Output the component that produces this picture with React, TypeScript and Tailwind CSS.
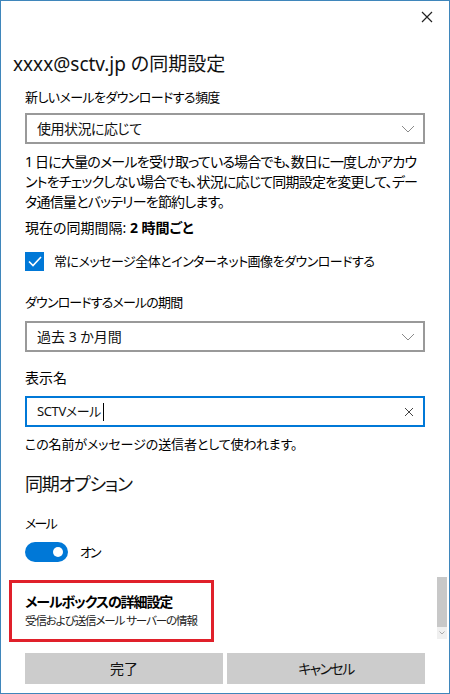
const font = "[font-family:'Noto_Sans','Noto_Sans_CJK_JP',sans-serif] [font-feature-settings:'palt']";

function Chevron() {
  return (
    <svg width="14" height="8" viewBox="0 0 14 8" className="shrink-0">
      <path d="M1 1 L7 7 L13 1" fill="none" stroke="#8a8a8a" strokeWidth="1" />
    </svg>
  );
}

function Select({ value, track }: { value: string; track: string }) {
  return (
    <div className="flex h-[31px] items-center justify-between border-2 border-[#999999] bg-white pl-[10px] pr-[8px]">
      <span className={`text-[14px] text-[#111] ${track}`}>{value}</span>
      <Chevron />
    </div>
  );
}

export default function App() {
  return (
    <div className={`relative h-[694px] w-[450px] overflow-hidden border border-[#3f86bb] bg-white text-black ${font}`}>
      {/* close */}
      <div className="flex h-[32px] justify-end pr-[16px] pt-[10px]">
        <svg width="12" height="12" viewBox="0 0 12 12">
          <path d="M1 1 L11 11 M11 1 L1 11" stroke="#222" strokeWidth="1.2" />
        </svg>
      </div>

      <div className="flex flex-col items-stretch px-[24px]">
        <h1 className="-ml-[12px] mt-[17px] h-[28px] whitespace-nowrap text-[19px] leading-[28px] text-[#111]">
          xxxx@sctv.jp の同期設定
        </h1>

        <p className="mt-[9px] h-[20px] text-[13px] leading-[20px] tracking-[-0.6px]">新しいメールをダウンロードする頻度</p>
        <div className="mt-[6px]">
          <Select value="使用状況に応じて" track="tracking-[-0.5px]" />
        </div>

        <p className="mt-[8px] whitespace-nowrap text-[14px] leading-[20px] tracking-[-0.8px]">
          1 日に大量のメールを受け取っている場合でも、数日に一度しかアカウ
          <br />
          ントをチェックしない場合でも、状況に応じて同期設定を変更して、デー
          <br />
          タ通信量とバッテリーを節約します。
        </p>

        <p className="mt-[6px] h-[20px] text-[14px] leading-[20px]">
          現在の同期間隔: <span className="font-bold">2 時間ごと</span>
        </p>

        <div className="mt-[13px] flex h-[20px] items-center gap-[10px]">
          <div className="flex h-[19px] w-[19px] items-center justify-center bg-[#0078d7]">
            <svg width="14" height="11" viewBox="0 0 14 11">
              <path d="M1 5.5 L5 9.5 L13 1" fill="none" stroke="#fff" strokeWidth="1.6" />
            </svg>
          </div>
          <span className="whitespace-nowrap text-[13px] leading-[20px] tracking-[-0.5px]">常にメッセージ全体とインターネット画像をダウンロードする</span>
        </div>

        <p className="mt-[21px] h-[20px] text-[13px] leading-[20px] tracking-[-0.85px]">ダウンロードするメールの期間</p>
        <div className="mt-[9px]">
          <Select value="過去 3 か月間" track="tracking-normal" />
        </div>

        <p className="mt-[16px] h-[20px] text-[14px] leading-[20px]">表示名</p>
        <div className="mt-[8px] flex h-[31px] items-center justify-between border-2 border-[#0078d7] bg-white pl-[10px] pr-[9px]">
          <span className="flex items-center text-[13px] tracking-[-0.4px] text-[#111]">
            SCTVメール
            <span className="ml-[2px] inline-block h-[18px] w-[1px] bg-black" />
          </span>
          <svg width="10" height="10" viewBox="0 0 10 10">
            <path d="M1 1 L9 9 M9 1 L1 9" stroke="#444" strokeWidth="1" />
          </svg>
        </div>

        <p className="mt-[7px] h-[20px] text-[13px] leading-[20px] tracking-[-0.1px]">この名前がメッセージの送信者として使われます。</p>

        <h2 className="mt-[16px] h-[28px] text-[18px] leading-[28px] tracking-[-1.2px] text-[#111]">同期オプション</h2>

        <p className="mt-[15px] h-[20px] text-[13px] leading-[20px] tracking-[-1.8px]">メール</p>

        <div className="mt-[9px] flex h-[20px] items-center gap-[12px]">
          <div className="flex h-[20px] w-[43px] items-center justify-end rounded-full bg-[#0078d7] pr-[5px]">
            <div className="h-[10px] w-[10px] rounded-full bg-white" />
          </div>
          <span className="text-[13px] leading-[20px] tracking-[-2px]">オン</span>
        </div>

        <div className="-ml-[16px] mt-[18px] flex h-[62px] w-[205px] flex-col items-start border-[3px] border-[#e0202a] pl-[13px] pt-[9px]">
          <span className="h-[20px] whitespace-nowrap text-[14px] font-bold leading-[20px] tracking-[-1.1px]">メールボックスの詳細設定</span>
          <span className="h-[18px] whitespace-nowrap text-[11.5px] leading-[18px] tracking-[-1.1px] text-[#222]">受信および送信メール サーバーの情報</span>
        </div>

        <div className="mt-[11px] grid h-[31px] grid-cols-2 gap-[4px]">
          <button className="bg-[#cccccc] text-[14px] text-[#111]">完了</button>
          <button className="bg-[#cccccc] text-[14px] tracking-[-1.6px] text-[#111]">キャンセル</button>
        </div>
      </div>

      {/* scrollbar */}
      <div className="absolute right-[2px] top-[576px] flex w-[10px] flex-col">
        <div className="h-[50px] bg-[#c8c8c8]" />
        <div className="flex h-[12px] items-center justify-center bg-[#f0f0f0]">
          <svg width="6" height="4" viewBox="0 0 6 4">
            <path d="M0.5 0.5 L3 3 L5.5 0.5" fill="none" stroke="#999" strokeWidth="0.8" />
          </svg>
        </div>
      </div>
    </div>
  );
}
